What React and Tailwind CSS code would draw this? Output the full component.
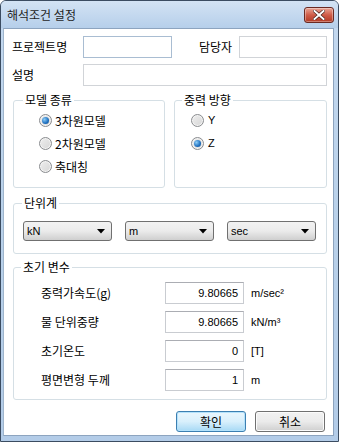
import React from "react";

const KR = { fontFamily: '"Noto Sans CJK KR", "Noto Sans", sans-serif' };
const LAT = { fontFamily: '"Liberation Sans", Arial, sans-serif' };

function Radio({ checked, label, latin }) {
  return (
    <div className="flex items-center h-[23px]">
      <div className="w-[13px] h-[13px] rounded-full border border-[#8a8c8f] bg-gradient-to-br from-[#eeeeee] to-[#d6d6d6] flex items-center justify-center shadow-[inset_0_0_0_1px_#f4f4f4]">
        {checked && (
          <div className="w-[7px] h-[7px] rounded-full bg-[radial-gradient(circle_at_35%_35%,#8ccdf8,#1e6fbf_60%,#134f8f)]" />
        )}
      </div>
      <span
        className={latin ? "ml-[4px] text-[11px] text-black" : "ml-[3px] text-[12px] text-black"}
        style={latin ? LAT : KR}
      >
        {label}
      </span>
    </div>
  );
}

function Select({ value }) {
  return (
    <div className="w-[89px] h-[20px] rounded-[3px] border border-[#707070] bg-gradient-to-b from-[#f2f2f2] via-[#ebebeb] to-[#cfcfcf] flex items-center justify-between pl-[3px] pr-[6px]">
      <span className="text-[11px] text-black" style={LAT}>{value}</span>
      <svg width="8" height="5" viewBox="0 0 8 5">
        <path d="M0 0 H8 L4 4.5 Z" fill="#000" />
      </svg>
    </div>
  );
}

function Group({ title, className, children, titleLeft = "left-[8px]" }) {
  return (
    <div className={"relative border border-[#d5dfe5] rounded-[3px] " + className}>
      <span
        className={"absolute -top-[9px] bg-white px-[2px] text-[12px] leading-[16px] text-black " + titleLeft}
        style={KR}
      >
        {title}
      </span>
      {children}
    </div>
  );
}

function Field({ label, value, unit }) {
  return (
    <div className="flex items-center h-[22px]">
      <span className="w-[151px] pl-[27px] text-[12px] text-black whitespace-nowrap" style={KR}>{label}</span>
      <div className="w-[79px] h-[22px] border border-[#c9ccd1] border-t-[#abadb3] bg-white flex items-center justify-end pr-[5px]">
        <span className="text-[11px] text-black" style={LAT}>{value}</span>
      </div>
      <span className="ml-[7px] text-[11px] text-black" style={LAT}>{unit}</span>
    </div>
  );
}

export default function App() {
  return (
    <div className="w-[339px] h-[442px] bg-white">
      <div className="w-[339px] h-[442px] border border-[#3b4c61] rounded-t-[6px] bg-gradient-to-b from-[#c4d9f0] via-[#b9d1ea] to-[#b3cce8] flex flex-col overflow-hidden">
        {/* title bar */}
        <div className="h-[27px] flex items-center justify-between pl-[6px] pr-[4px] bg-gradient-to-b from-[#d3e3f4] to-[#b6cfea]">
          <span className="text-[12px] text-[#1e1e1e] mt-[1px]" style={KR}>해석조건 설정</span>
          <div className="w-[30px] h-[16px] mt-[1px] rounded-[3px] border border-[#6a2a22] bg-gradient-to-b from-[#e8a595] via-[#cf5c48] to-[#b23a24] flex items-center justify-center shadow-[inset_0_0_0_1px_rgba(255,255,255,0.35)]">
            <svg width="12" height="10" viewBox="0 0 12 10">
              <path d="M1.5 1 L10.5 9 M10.5 1 L1.5 9" stroke="#3a1a14" strokeWidth="3.2" strokeLinecap="square" />
              <path d="M1.5 1 L10.5 9 M10.5 1 L1.5 9" stroke="#ffffff" strokeWidth="2" strokeLinecap="square" />
            </svg>
          </div>
        </div>
        {/* body */}
        <div className="flex-1 flex pl-[2px] pr-[4px] pb-[5px]">
          <div className="flex-1 bg-white border border-[#8da4bf] border-l-[#9fb5cc] flex flex-col">
            {/* row 1 */}
            <div className="flex items-center mt-[7px] pl-[8px]">
              <span className="w-[71px] text-[12px] text-black" style={KR}>프로젝트명</span>
              <div className="w-[89px] h-[22px] border border-[#a9bdd2] bg-white" />
              <span className="ml-[27px] w-[40px] text-[12px] text-black" style={KR}>담당자</span>
              <div className="ml-[0px] w-[88px] h-[22px] border border-[#d1d4d8] bg-white" />
            </div>
            {/* row 2 */}
            <div className="flex items-center mt-[6px] pl-[8px]">
              <span className="w-[71px] text-[12px] text-black" style={KR}>설명</span>
              <div className="w-[244px] h-[22px] border border-[#d1d4d8] bg-white" />
            </div>
            {/* groups row */}
            <div className="flex mt-[14px] pl-[9px]">
              <Group title="모델 종류" className="w-[152px] h-[88px]" titleLeft="left-[9px]">
                <div className="pl-[25px] pt-[8px] flex flex-col">
                  <Radio checked label="3차원모델" />
                  <Radio label="2차원모델" />
                  <Radio label="축대칭" />
                </div>
              </Group>
              <Group title="중력 방향" className="ml-[9px] w-[153px] h-[88px]" titleLeft="left-[7px]">
                <div className="pl-[16px] pt-[8px] flex flex-col">
                  <Radio label="Y" latin />
                  <Radio checked label="Z" latin />
                </div>
              </Group>
            </div>
            {/* 단위계 */}
            <Group title="단위계" className="mt-[15px] ml-[9px] w-[314px] h-[51px]" titleLeft="left-[8px]">
              <div className="flex gap-[13px] pl-[9px] pt-[17px]">
                <Select value="kN" />
                <Select value="m" />
                <Select value="sec" />
              </div>
            </Group>
            {/* 초기 변수 */}
            <Group title="초기 변수" className="mt-[13px] ml-[9px] w-[314px] h-[133px]" titleLeft="left-[7px]">
              <div className="flex flex-col gap-[7px] pt-[14px]">
                <Field label="중력가속도(g)" value="9.80665" unit="m/sec²" />
                <Field label="물 단위중량" value="9.80665" unit="kN/m³" />
                <Field label="초기온도" value="0" unit="[T]" />
                <Field label="평면변형 두께" value="1" unit="m" />
              </div>
            </Group>
            {/* buttons */}
            <div className="flex justify-end gap-[9px] mt-[11px] pr-[8px]">
              <div className="w-[70px] h-[21px] rounded-[3px] border border-[#3c7fb1] bg-gradient-to-b from-[#eaf6fd] via-[#d9f0fc] to-[#a7d9f5] flex items-center justify-center shadow-[inset_0_0_0_1px_#b4e2fb]">
                <span className="text-[12px] text-black" style={KR}>확인</span>
              </div>
              <div className="w-[70px] h-[21px] rounded-[3px] border border-[#707070] bg-gradient-to-b from-[#f2f2f2] via-[#ebebeb] to-[#cfcfcf] flex items-center justify-center shadow-[inset_0_0_0_1px_#fbfbfb]">
                <span className="text-[12px] text-black" style={KR}>취소</span>
              </div>
            </div>
          </div>
        </div>
      </div>
    </div>
  );
}
